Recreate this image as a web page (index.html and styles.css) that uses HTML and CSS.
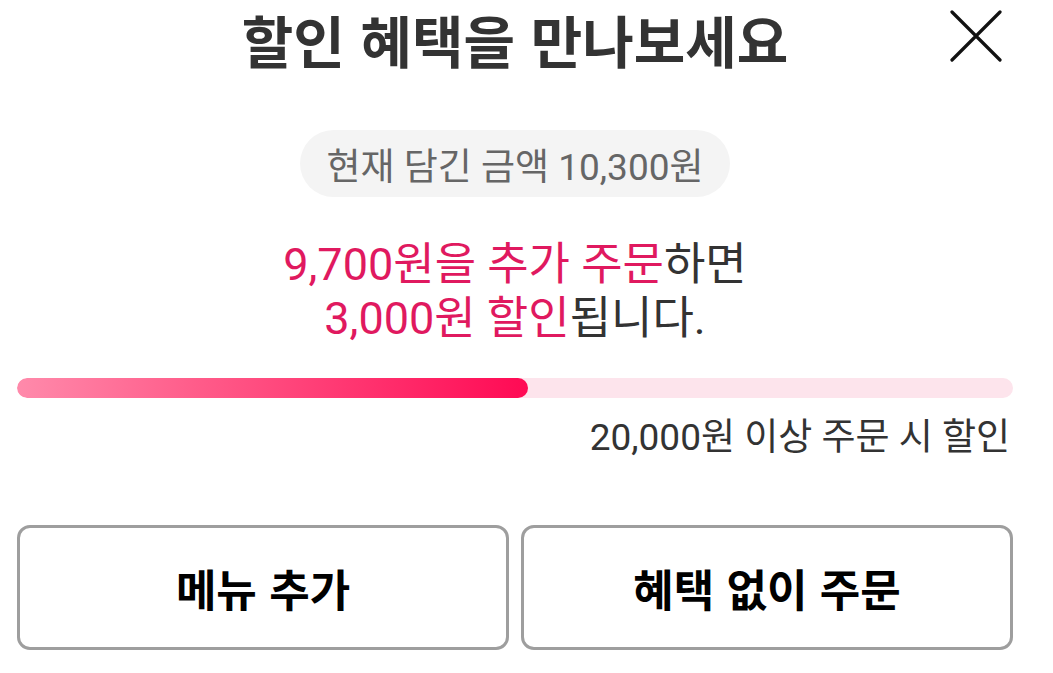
FILE: index.html
```html
<!DOCTYPE html>
<html lang="ko">
<head>
<meta charset="utf-8">
<link rel="stylesheet" href="styles.css">
</head>
<body>
<div class="sheet">
  <header class="head">
    <h1 class="title">할인 혜택을 만나보세요</h1>
    <button class="close" aria-label="닫기">
      <svg width="52" height="52" viewBox="0 0 52 52"><path d="M2 2 L50 50 M50 2 L2 50" stroke="#111" stroke-width="3.2" stroke-linecap="round" fill="none"/></svg>
    </button>
  </header>
  <div class="pill-row"><span class="pill">현재 담긴 금액 10,300원</span></div>
  <p class="msg"><span class="hl">9,700원을 추가 주문</span>하면<br><span class="hl">3,000원 할인</span>됩니다.</p>
  <div class="track"><div class="fill" style="width:51.3%"></div></div>
  <p class="goal">20,000원 이상 주문 시 할인</p>
  <div class="actions">
    <button class="btn">메뉴 추가</button>
    <button class="btn">혜택 없이 주문</button>
  </div>
</div>
</body>
</html>
```
FILE: styles.css
```css
html, body {
  margin: 0;
  padding: 0;
  background: #fff;
}
body {
  font-family: Roboto, "Noto Sans CJK KR", sans-serif;
  color: #333;
}
.sheet {
  width: 996px;
  margin-left: 17px;
}
.head {
  position: relative;
  height: 78px;
  display: flex;
  align-items: center;
  justify-content: center;
}
.title {
  margin: 0;
  font-family: "Noto Sans CJK KR", sans-serif;
  font-weight: 700;
  font-size: 56px;
  line-height: 78px;
  color: #333;
}
.close {
  position: absolute;
  left: 933px;
  top: 10px;
  width: 52px;
  height: 52px;
  padding: 0;
  border: 0;
  background: none;
  display: flex;
}
.pill-row {
  display: flex;
  justify-content: center;
  margin-top: 52px;
}
.pill {
  display: inline-flex;
  align-items: center;
  height: 67px;
  padding: 0 26px;
  border-radius: 34px;
  background: #f4f4f4;
  color: #666;
  font-size: 37px;
}
.msg {
  margin: 41px 0 0;
  text-align: center;
  font-size: 45px;
  line-height: 54px;
  color: #333;
}
.hl {
  color: #e0195f;
}
.track {
  margin-top: 32px;
  height: 20px;
  border-radius: 10px;
  background: #fde4ec;
  overflow: hidden;
}
.fill {
  height: 100%;
  border-radius: 10px;
  background: linear-gradient(90deg, #ff8aab 0%, #ff5c8a 35%, #ff0a54 100%);
}
.goal {
  margin: 17px 3px 0 0;
  text-align: right;
  font-size: 37px;
  line-height: 46px;
  color: #333;
}
.actions {
  margin-top: 64px;
  display: grid;
  grid-template-columns: 1fr 1fr;
  gap: 12px;
}
.btn {
  height: 125px;
  box-sizing: border-box;
  border: 3px solid #9e9e9e;
  border-radius: 13px;
  background: #fff;
  font-family: "Noto Sans CJK KR", sans-serif;
  font-weight: 700;
  font-size: 44px;
  color: #000;
  padding: 0;
}
```
